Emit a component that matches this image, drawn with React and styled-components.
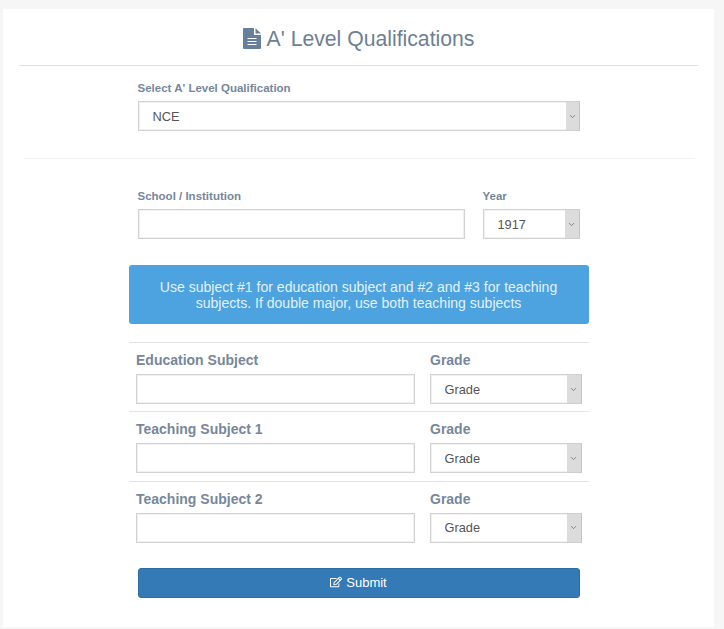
import React from "react";
import styled, { createGlobalStyle } from "styled-components";
import { FaRegEdit } from "react-icons/fa";
import { FiChevronDown } from "react-icons/fi";

const GlobalStyle = createGlobalStyle`
  html, body {
    margin: 0;
    background: #f6f6f6;
    font-family: "Liberation Sans", Arial, sans-serif;
  }
`;

const subjects = ["Education Subject", "Teaching Subject 1", "Teaching Subject 2"];

const FileIcon = () => (
  <TitleIcon viewBox="0 0 18 21">
    <path d="M1 0H11V7H18V20a1 1 0 0 1-1 1H1a1 1 0 0 1-1-1V1a1 1 0 0 1 1-1z" fill="currentColor" />
    <path d="M12.5 0.3 18 5.5H12.5z" fill="currentColor" />
    <path d="M4.5 10.5H13.5M4.5 13.5H13.5M4.5 16.5H13.5" stroke="#fff" strokeWidth="1.2" />
  </TitleIcon>
);

const Dropdown = ({ value, strip }) => (
  <SelectWrap>
    <Select defaultValue={value}>
      <option>{value}</option>
    </Select>
    <Arrow $strip={strip}>
      <FiChevronDown />
    </Arrow>
  </SelectWrap>
);

const App = () => (
  <>
    <GlobalStyle />
    <Page>
      <Card>
        <Title>
          <FileIcon />
          A' Level Qualifications
        </Title>
        <Form>
          <Section>
            <Label>Select A' Level Qualification</Label>
            <Dropdown value="NCE" strip={14} />
          </Section>
          <Divider />
          <SchoolRow>
            <div>
              <Label>School / Institution</Label>
              <Input />
            </div>
            <div>
              <Label>Year</Label>
              <Dropdown value="1917" strip={15} />
            </div>
          </SchoolRow>
          <Alert>
            Use subject #1 for education subject and #2 and #3 for teaching
            subjects. If double major, use both teaching subjects
          </Alert>
          <Subjects>
            {subjects.map((name) => (
              <SubjectRow key={name}>
                <div>
                  <BigLabel>{name}</BigLabel>
                  <Input />
                </div>
                <div>
                  <BigLabel>Grade</BigLabel>
                  <Dropdown value="Grade" strip={15} />
                </div>
              </SubjectRow>
            ))}
          </Subjects>
          <Submit type="button">
            <FaRegEdit className="icon" />
            Submit
          </Submit>
        </Form>
      </Card>
    </Page>
  </>
);

const Page = styled.div`
  padding: 9px 10px 2px 3px;
`;

const Card = styled.div`
  background: #fff;
  height: 618px;
  box-sizing: border-box;
  padding-top: 14px;
`;

const Title = styled.h2`
  margin: 0 16px 0;
  height: 43px;
  box-sizing: border-box;
  padding-top: 3px;
  border-bottom: 1px solid #dfe1e3;
  text-align: center;
  font-size: 21.2px;
  line-height: 26px;
  font-weight: 400;
  color: #6d7f95;
`;

const TitleIcon = styled.svg`
  width: 18px;
  height: 21px;
  margin-right: 6px;
  vertical-align: -3px;
  color: #66809c;
`;

const Form = styled.form`
  width: 460px;
  margin: 15px auto 0;
`;

const Section = styled.div`
  padding: 0 9px;
`;

const Label = styled.label`
  display: block;
  height: 20px;
  font-size: 11.5px;
  line-height: 15px;
  font-weight: 700;
  color: #76879c;
`;

const BigLabel = styled.label`
  display: block;
  height: 23px;
  padding-left: 0.5px;
  font-size: 14px;
  line-height: 18px;
  font-weight: 700;
  color: #76879c;
`;

const SelectWrap = styled.div`
  position: relative;
`;

const Select = styled.select`
  appearance: none;
  display: block;
  width: 100%;
  height: 30px;
  box-sizing: border-box;
  margin: 0;
  padding: 0 0 0 14px;
  border: 1px solid #d2d2d2;
  border-radius: 0;
  box-shadow: inset 0 0 0 1px #f1f1f1;
  background: #fff;
  font-family: inherit;
  font-size: 12.8px;
  color: #555;
`;

const Arrow = styled.span`
  position: absolute;
  top: 0;
  right: 0;
  width: ${(p) => p.$strip}px;
  height: 30px;
  box-sizing: border-box;
  display: flex;
  align-items: center;
  justify-content: center;
  border: 1px solid #cfcfcf;
  border-left: 0;
  border-right-color: #c4c4c4;
  background: #dcdcdc;
  pointer-events: none;
  font-size: 9px;
  color: #666;
`;

const Input = styled.input`
  display: block;
  width: 100%;
  height: 30px;
  box-sizing: border-box;
  margin: 0;
  border: 1px solid #d2d2d2;
  border-radius: 0;
  box-shadow: inset 0 0 0 1px #f1f1f1;
  background: #fff;
`;

const Divider = styled.hr`
  width: 671px;
  margin: 27px 0 0 -105px;
  border: 0;
  border-top: 1px solid #f3f3f3;
`;

const SchoolRow = styled.div`
  display: grid;
  grid-template-columns: 327px 97px;
  column-gap: 18px;
  padding: 0 9px;
  margin-top: 30px;
`;

const Alert = styled.div`
  margin-top: 26px;
  height: 59px;
  box-sizing: border-box;
  padding: 15px 20px 0;
  border-radius: 3px;
  background: #4ca3e0;
  text-align: center;
  font-size: 14.05px;
  line-height: 15.5px;
  color: #e3f1fb;
`;

const Subjects = styled.div`
  margin-top: 18px;
`;

const SubjectRow = styled.div`
  display: grid;
  grid-template-columns: 279px 152px;
  column-gap: 15px;
  height: 69.4px;
  box-sizing: border-box;
  padding: 8px 7px 0;
  border-top: 1px solid #e4e4e4;
`;

const Submit = styled.button`
  display: block;
  width: 442px;
  height: 30px;
  margin: 17.8px 0 0 9px;
  padding: 0;
  border: 1px solid #2e6da4;
  border-radius: 3px;
  background: #337ab7;
  font-family: inherit;
  font-size: 13px;
  color: #fff;

  .icon {
    width: 12px;
    height: 12px;
    margin-right: 4px;
    vertical-align: -1px;
  }
`;

export default App;
